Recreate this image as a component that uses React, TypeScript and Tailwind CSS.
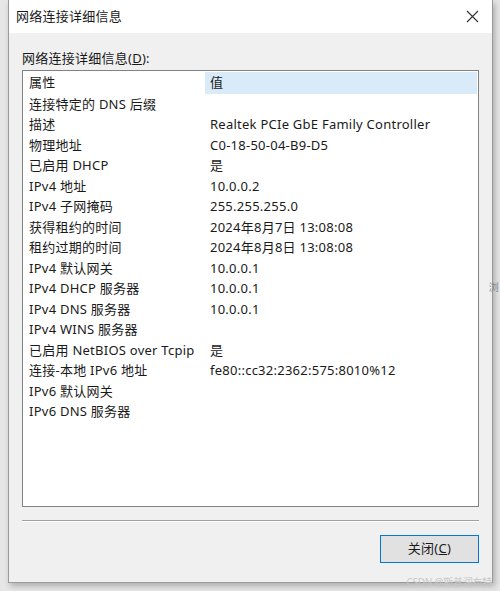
import React from "react";

const rows: [string, string][] = [
  ["连接特定的 DNS 后缀", ""],
  ["描述", "Realtek PCIe GbE Family Controller"],
  ["物理地址", "C0-18-50-04-B9-D5"],
  ["已启用 DHCP", "是"],
  ["IPv4 地址", "10.0.0.2"],
  ["IPv4 子网掩码", "255.255.255.0"],
  ["获得租约的时间", "2024年8月7日 13:08:08"],
  ["租约过期的时间", "2024年8月8日 13:08:08"],
  ["IPv4 默认网关", "10.0.0.1"],
  ["IPv4 DHCP 服务器", "10.0.0.1"],
  ["IPv4 DNS 服务器", "10.0.0.1"],
  ["IPv4 WINS 服务器", ""],
  ["已启用 NetBIOS over Tcpip", "是"],
  ["连接-本地 IPv6 地址", "fe80::cc32:2362:575:8010%12"],
  ["IPv6 默认网关", ""],
  ["IPv6 DNS 服务器", ""],
];

const font = {
  fontFamily: '"Noto Sans", "Noto Sans CJK SC", sans-serif',
};

export default function App() {
  return (
    <div
      className="w-[500px] h-[591px] bg-[#e6e6e6] flex overflow-hidden relative text-[#1a1a1a] tracking-[0.25px]"
      style={font}
    >
      {/* window */}
      <div className="ml-[8px] w-[485px] h-[583px] bg-[#f0f0f0] border-l border-r border-b border-[#9a9a9a] shadow-[2px_3px_6px_rgba(0,0,0,0.25)] flex flex-col">
        {/* title bar */}
        <div className="h-[33px] bg-white flex items-center justify-between pl-[7px] pr-[13px]">
          <span className="text-[13px] leading-none">网络连接详细信息</span>
          <svg width="13" height="13" viewBox="0 0 13 13" className="text-[#333]">
            <path d="M1 1 L12 12 M12 1 L1 12" stroke="currentColor" strokeWidth="1.1" fill="none" />
          </svg>
        </div>

        {/* body */}
        <div className="flex flex-col px-[13px] pt-[15px]">
          <div className="text-[13px] leading-[20px] mb-[2px]">
            网络连接详细信息(<span className="underline">D</span>):
          </div>

          <div className="h-[437px] bg-white border border-[#828282] flex flex-col pt-[1px] px-[1px]">
            <div className="flex h-[22px] text-[13px] items-center">
              <div className="w-[181px] pl-[5px]">属性</div>
              <div className="flex-1 h-full bg-[#d9ebf9] flex items-center pl-[5px]">值</div>
            </div>
            {rows.map(([k, v]) => (
              <div key={k} className="flex h-[20.5px] items-center text-[13px] whitespace-nowrap">
                <div className="w-[181px] pl-[5px]">{k}</div>
                <div className="flex-1 pl-[5px]">{v}</div>
              </div>
            ))}
          </div>

          <div className="mt-[13px] h-[2px] border-t border-[#a0a0a0] border-b border-b-white" />

          <div className="flex justify-end mt-[13px]">
            <button className="w-[99px] h-[28px] border border-[#0078d7] bg-[#e1e1e1] text-[13px] flex items-center justify-center">
              关闭(<span className="underline">C</span>)
            </button>
          </div>
        </div>
      </div>

      {/* right background strip text */}
      <div className="absolute right-[1px] top-[280px] text-[10px] text-[#888]">浏</div>

      {/* watermark */}
      <div className="absolute right-[8px] bottom-[1px] text-[10px] text-[#c8c8c8] tracking-tight">
        CSDN @斯普润布特
      </div>
    </div>
  );
}
